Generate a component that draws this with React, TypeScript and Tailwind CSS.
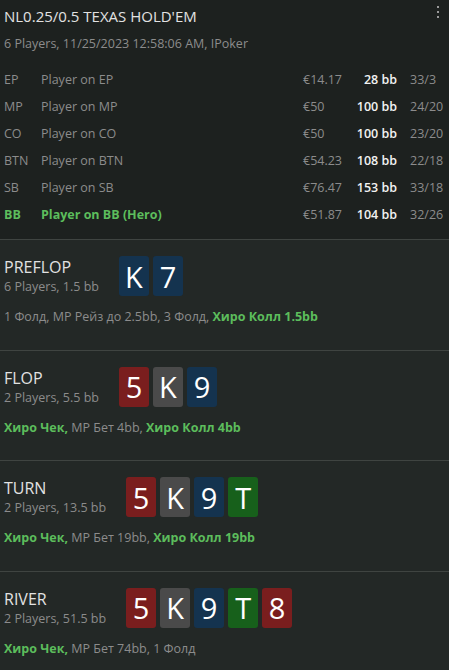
const players = [
  { pos: "EP", name: "Player on EP", stack: "€14.17", bb: "28 bb", stats: "33/3" },
  { pos: "MP", name: "Player on MP", stack: "€50", bb: "100 bb", stats: "24/20" },
  { pos: "CO", name: "Player on CO", stack: "€50", bb: "100 bb", stats: "23/20" },
  { pos: "BTN", name: "Player on BTN", stack: "€54.23", bb: "108 bb", stats: "22/18" },
  { pos: "SB", name: "Player on SB", stack: "€76.47", bb: "153 bb", stats: "33/18" },
  { pos: "BB", name: "Player on BB (Hero)", stack: "€51.87", bb: "104 bb", stats: "32/26", hero: true },
];

type Suit = "r" | "g" | "b" | "n";

const suitBg: Record<Suit, string> = {
  r: "bg-[#7a1e1e]",
  n: "bg-[#4a4a4a]",
  b: "bg-[#14334f]",
  g: "bg-[#17601b]",
};

interface Street {
  title: string;
  info: string;
  cards: [string, Suit][];
  actions: { text: string; hero?: boolean }[];
}

const streets: Street[] = [
  {
    title: "PREFLOP",
    info: "6 Players, 1.5 bb",
    cards: [["K", "b"], ["7", "b"]],
    actions: [{ text: "1 Фолд, MP Рейз до 2.5bb, 3 Фолд, " }, { text: "Хиро Колл 1.5bb", hero: true }],
  },
  {
    title: "FLOP",
    info: "2 Players, 5.5 bb",
    cards: [["5", "r"], ["K", "n"], ["9", "b"]],
    actions: [{ text: "Хиро Чек,", hero: true }, { text: " MP Бет 4bb, " }, { text: "Хиро Колл 4bb", hero: true }],
  },
  {
    title: "TURN",
    info: "2 Players, 13.5 bb",
    cards: [["5", "r"], ["K", "n"], ["9", "b"], ["T", "g"]],
    actions: [{ text: "Хиро Чек,", hero: true }, { text: " MP Бет 19bb, " }, { text: "Хиро Колл 19bb", hero: true }],
  },
  {
    title: "RIVER",
    info: "2 Players, 51.5 bb",
    cards: [["5", "r"], ["K", "n"], ["9", "b"], ["T", "g"], ["8", "r"]],
    actions: [{ text: "Хиро Чек,", hero: true }, { text: " MP Бет 74bb, 1 Фолд" }],
  },
];

const Card = ({ rank, suit }: { rank: string; suit: Suit }) => (
  <div
    className={`w-[30px] h-[40px] rounded-[3px] flex items-center justify-center text-white text-[29px] leading-none ${suitBg[suit]}`}
  >
    {rank}
  </div>
);

export default function App() {
  return (
    <div
      className="w-[449px] h-[670px] overflow-hidden bg-[#232826]"
      style={{ fontFamily: '"Open Sans", "Noto Sans", sans-serif' }}
    >
      {/* hand header */}
      <div className="bg-[#1d211f] px-1 pt-[4px] pb-[10px] border-b border-[#3f4441] relative">
        <div className="text-[15px] leading-[25px] text-[#e2e2e2]">NL0.25/0.5 TEXAS HOLD'EM</div>
        <div className="text-[12.5px] leading-[18px] text-[#8c8c8c] mt-[6px]">
          6 Players, 11/25/2023 12:58:06 AM, IPoker
        </div>
        <div className="absolute right-[10px] top-[6px] flex flex-col gap-[3px]">
          <span className="w-[2px] h-[2px] bg-[#9a9a9a]"></span>
          <span className="w-[2px] h-[2px] bg-[#9a9a9a]"></span>
          <span className="w-[2px] h-[2px] bg-[#9a9a9a]"></span>
        </div>
        <div className="mt-[14px]">
          {players.map((p) => (
            <div key={p.pos} className="flex items-center h-[27px] text-[12.5px]">
              <div className={`w-[37px] ${p.hero ? "text-[#5cbd5c] font-bold" : "text-[#8c8c8c]"}`}>{p.pos}</div>
              <div className={`flex-1 ${p.hero ? "text-[#5cbd5c] font-bold" : "text-[#8c8c8c]"}`}>{p.name}</div>
              <div className="w-[52px] text-[#8c8c8c]">{p.stack}</div>
              <div className="w-[42px] text-right text-[#f2f2f2] font-semibold">{p.bb}</div>
              <div className="w-[35px] ml-[13px] text-[#8c8c8c]">{p.stats}</div>
            </div>
          ))}
        </div>
      </div>

      {streets.map((s) => (
        <div key={s.title} className="border-b border-[#3f4441] px-1 pt-4 pb-[23.6px]">
          <div className="flex items-center gap-5 h-[40px]">
            <div>
              <div className="text-[16px] leading-[22px] text-[#e2e2e2]">{s.title}</div>
              <div className="text-[12.5px] leading-[18px] text-[#8c8c8c]">{s.info}</div>
            </div>
            <div className="flex gap-1">
              {s.cards.map(([rank, suit], i) => (
                <Card key={i} rank={rank} suit={suit} />
              ))}
            </div>
          </div>
          <div className="mt-3 text-[12.5px] leading-[18px] text-[#8c8c8c]">
            {s.actions.map((a, i) => (
              <span key={i} className={a.hero ? "text-[#5cbd5c] font-bold" : ""}>
                {a.text}
              </span>
            ))}
          </div>
        </div>
      ))}
    </div>
  );
}
